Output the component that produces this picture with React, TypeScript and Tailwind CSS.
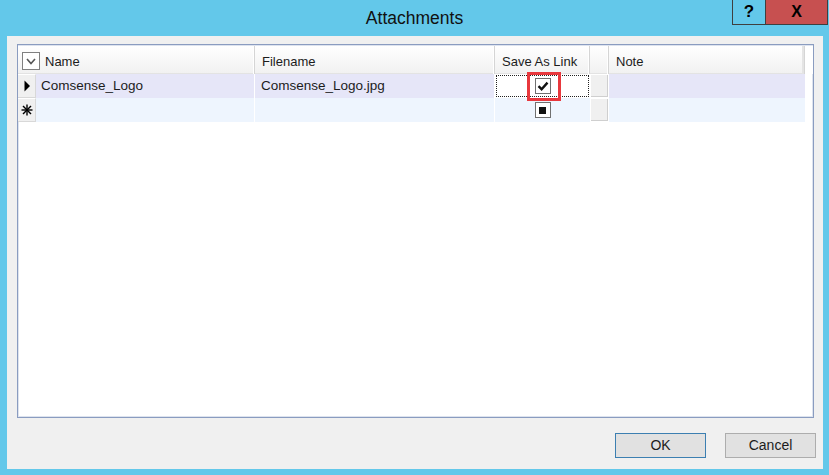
import React from "react";

function CheckBox({ state }: { state: "checked" | "null" }) {
  return (
    <div className="w-[16px] h-[16px] border border-[#707070] bg-white flex items-center justify-center">
      {state === "checked" ? (
        <svg width="12" height="12" viewBox="0 0 12 12">
          <path d="M1.5 6.2 L4.6 9.2 L10.5 2.6" fill="none" stroke="#111" strokeWidth="2.4" />
        </svg>
      ) : (
        <div className="w-[7px] h-[7px] bg-[#111]" />
      )}
    </div>
  );
}

function RowHeader({ children }: { children?: React.ReactNode }) {
  return (
    <div className="w-[18px] h-full bg-[#f0f0f0] border-r border-b border-[#d8d8d8] border-t border-t-white flex items-center justify-center shrink-0">
      {children}
    </div>
  );
}

function BtnCell() {
  return (
    <div className="w-[19px] h-full shrink-0 bg-white p-[1px]">
      <div className="w-full h-full bg-[#f0f0f0] border-r border-b border-[#cfcfcf]" />
    </div>
  );
}

export default function App() {
  const headCell =
    "h-full shrink-0 flex items-center pt-[4px] bg-gradient-to-b from-white to-[#f1f1f1] border-r border-[#d5d5d5] shadow-[inset_-1px_0_0_#ffffff,inset_0_-1px_0_#e3e3e3]";
  return (
    <div className="w-[829px] h-[475px] bg-[#63c8ea] flex flex-col font-['Liberation_Sans',Arial,sans-serif] text-[#1c1c1c]">
      <div className="h-[36px] relative flex items-center justify-center shrink-0">
        <span className="text-[17.5px] text-[#111] leading-none mt-[1px]">Attachments</span>
        <div className="absolute top-0 right-[1px] flex h-[25px] border-l border-b border-r border-[#3f3f3f]">
          <div className="w-[33px] h-full flex items-center justify-center border-r border-[#3f3f3f] text-[17px] font-bold text-black">
            ?
          </div>
          <div className="w-[61px] h-full bg-[#c75050] flex items-center justify-center text-[16px] font-bold text-black">
            X
          </div>
        </div>
      </div>
      <div className="ml-[7px] mr-[6px] h-[433px] bg-[#f0f0f0] flex flex-col pt-[8px] pl-[10px] pr-[7px]">
        <div className="h-[374px] mr-[2px] border border-[#8a9cc0] bg-white shadow-[inset_0_0_0_1px_#dde3ee] flex flex-col">
          {/* header */}
          <div className="h-[28px] flex text-[13px] text-[#1c1c1c] mt-[1px]">
            <div className={`${headCell} w-[237px] pl-[4px]`}>
              <div className="w-[18px] h-[18px] -mt-[3px] border border-[#808080] bg-white flex items-center justify-center mr-[5px]">
                <svg width="12" height="12" viewBox="0 0 12 12">
                  <path d="M2 4 L6 8.5 L10 4" fill="none" stroke="#555" strokeWidth="1.6" />
                </svg>
              </div>
              <span>Name</span>
            </div>
            <div className={`${headCell} w-[240px] pl-[7px]`}>Filename</div>
            <div className={`${headCell} w-[95px] pl-[7px]`}>Save As Link</div>
            <div className={`${headCell} w-[19px]`} />
            <div className={`${headCell} w-[196px] pl-[7px] border-[#cfcfcf] shadow-[inset_-2px_0_0_#e4e4e4,inset_0_-1px_0_#e3e3e3]`}>Note</div>
            <div className="flex-1 bg-white" />
          </div>
          {/* row 1 */}
          <div className="h-[24px] flex text-[13.5px]">
            <RowHeader>
              <svg width="8" height="12" viewBox="0 0 8 12">
                <path d="M1.5 0.5 L7 6 L1.5 11.5 Z" fill="#000" />
              </svg>
            </RowHeader>
            <div className="w-[219px] h-full bg-[#e6e6f8] border-r border-white flex items-center pl-[5px]">Comsense_Logo</div>
            <div className="w-[240px] h-full bg-[#e6e6f8] border-r border-white flex items-center pl-[6px]">Comsense_Logo.jpg</div>
            <div className="w-[95px] h-full bg-white relative p-[1px]">
              <div className="w-full h-full border border-dotted border-[#222] flex items-center justify-center">
                <CheckBox state="checked" />
              </div>
              <div className="absolute left-[32px] top-[-2px] w-[34px] h-[29px] border-[3px] border-[#e8383d]" />
            </div>
            <BtnCell />
            <div className="w-[196px] h-full bg-[#e6e6f8]" />
          </div>
          {/* row 2 */}
          <div className="h-[24px] flex text-[13.5px]">
            <RowHeader>
              <svg width="12" height="12" viewBox="0 0 12 12">
                <g stroke="#000" strokeWidth="1.4">
                  <line x1="6" y1="0.5" x2="6" y2="11.5" />
                  <line x1="0.5" y1="6" x2="11.5" y2="6" />
                  <line x1="2" y1="2" x2="10" y2="10" />
                  <line x1="10" y1="2" x2="2" y2="10" />
                </g>
              </svg>
            </RowHeader>
            <div className="w-[219px] h-full bg-[#eef5fe] border-r border-white" />
            <div className="w-[240px] h-full bg-[#eef5fe] border-r border-white" />
            <div className="w-[95px] h-full bg-[#eef5fe] flex items-center justify-center">
              <CheckBox state="null" />
            </div>
            <BtnCell />
            <div className="w-[196px] h-full bg-[#eef5fe]" />
          </div>
          <div className="flex-1" />
        </div>
        <div className="mt-[15px] flex justify-end gap-[19px] text-[14px] text-[#1c1c1c]">
          <div className="w-[91px] h-[25px] bg-[#e1e1e1] border border-[#3c7fb1] flex items-center justify-center">OK</div>
          <div className="w-[91px] h-[25px] bg-[#e1e1e1] border border-[#adadad] flex items-center justify-center">Cancel</div>
        </div>
      </div>
    </div>
  );
}
